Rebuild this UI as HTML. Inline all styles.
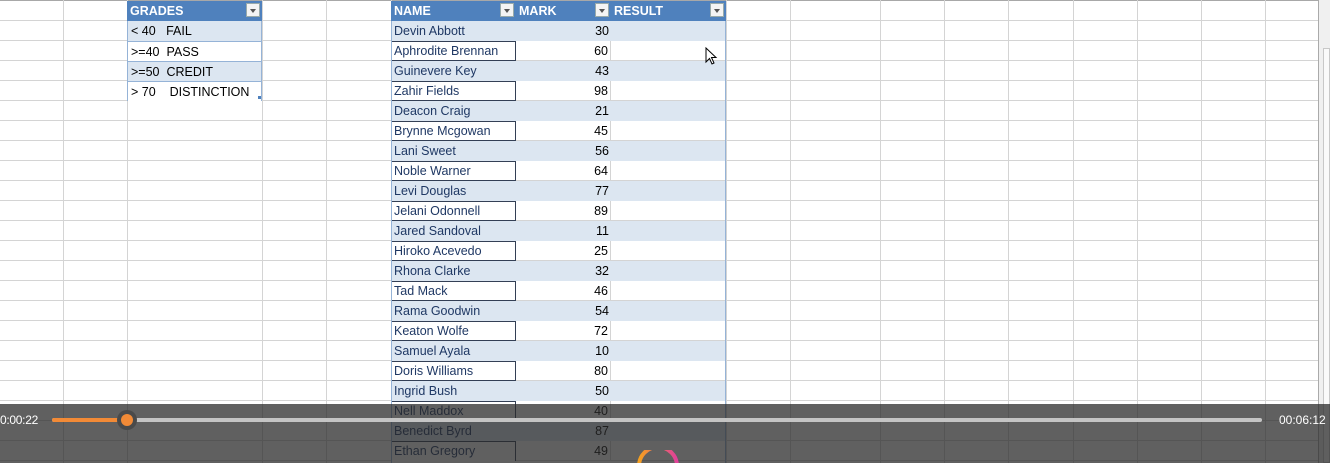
<!DOCTYPE html>
<html><head><meta charset="utf-8"><style>
*{margin:0;padding:0;box-sizing:border-box}
body{width:1330px;height:463px;overflow:hidden;background:#fff;position:relative;font-family:"Liberation Sans",Arial,sans-serif;font-size:12.5px}
.v{position:absolute;top:0;width:1px;height:463px;background:#d4d4d4}
.h{position:absolute;left:0;width:1318px;height:1px;background:#d4d4d4}
.c{position:absolute;height:20px;line-height:20px;white-space:nowrap;overflow:hidden}
.hd{background:#4f81bd;color:#fff;font-weight:bold;padding-left:3px}
.dd{position:absolute;top:3px;width:14px;height:14px;background:#f4f4f4;border:1px solid #9aa;}
.dd:after{content:"";position:absolute;left:3px;top:5px;border-left:3.5px solid transparent;border-right:3.5px solid transparent;border-top:4px solid #555}
.b{background:#dce6f1}
.w{background:#fff}
.nm{color:#1f3864;padding-left:3px}
.mk{text-align:right;padding-right:2px;color:#000}
.g{color:#000;padding-left:3px}
</style></head><body>
<!-- grid -->
<div class="h" style="top:0;background:#a8a8a8"></div>
<div class="h" style="top:20px"></div><div class="h" style="top:40px"></div><div class="h" style="top:60px"></div><div class="h" style="top:80px"></div><div class="h" style="top:100px"></div><div class="h" style="top:120px"></div><div class="h" style="top:140px"></div><div class="h" style="top:160px"></div><div class="h" style="top:180px"></div><div class="h" style="top:200px"></div><div class="h" style="top:220px"></div><div class="h" style="top:240px"></div><div class="h" style="top:260px"></div><div class="h" style="top:280px"></div><div class="h" style="top:300px"></div><div class="h" style="top:320px"></div><div class="h" style="top:340px"></div><div class="h" style="top:360px"></div><div class="h" style="top:380px"></div><div class="h" style="top:400px"></div><div class="h" style="top:420px"></div><div class="h" style="top:440px"></div><div class="h" style="top:460px"></div>
<div class="v" style="left:63px"></div><div class="v" style="left:127px"></div><div class="v" style="left:262px"></div><div class="v" style="left:326px"></div><div class="v" style="left:391px"></div><div class="v" style="left:726px"></div><div class="v" style="left:790px"></div><div class="v" style="left:880px"></div><div class="v" style="left:944px"></div><div class="v" style="left:1008px"></div><div class="v" style="left:1073px"></div><div class="v" style="left:1137px"></div><div class="v" style="left:1201px"></div><div class="v" style="left:1265px"></div><div class="v" style="left:1318px;background:#aaa"></div>
<div style="position:absolute;left:1319px;top:0;width:11px;height:463px;background:#f0f0f0"></div>
<div style="position:absolute;left:1323px;top:48px;width:7px;height:415px;border:1px solid #c8c8c8;background:#fafafa"></div>

<!-- grades table -->
<div class="c hd" style="left:127px;top:1px;width:135px">GRADES</div><div class="dd" style="left:246px"></div>
<div class="c b g" style="left:127px;top:21px;width:135px;border-left:1px solid #95b3d7;border-right:1px solid #95b3d7">&lt; 40&nbsp;&nbsp; FAIL</div>
<div class="c w g" style="left:127px;top:41px;width:135px;border:1px solid #95b3d7;border-width:1px 1px 0 1px">&gt;=40&nbsp; PASS</div>
<div class="c b g" style="left:127px;top:61px;width:135px;border:1px solid #95b3d7;border-width:1px 1px 0 1px">&gt;=50&nbsp; CREDIT</div>
<div class="c w g" style="left:127px;top:81px;width:135px;border:1px solid #95b3d7;border-width:1px 1px 0 1px">&gt; 70&nbsp;&nbsp;&nbsp; DISTINCTION</div>
<div style="position:absolute;left:258px;top:96px;width:3px;height:3px;background:#4f81bd"></div>

<!-- main table header -->
<div class="c hd" style="left:391px;top:1px;width:335px"></div>
<div class="c hd" style="left:391px;top:1px;width:125px;background:none">NAME</div><div class="dd" style="left:500px"></div>
<div class="c hd" style="left:516px;top:1px;width:95px;background:none">MARK</div><div class="dd" style="left:595px"></div>
<div class="c hd" style="left:611px;top:1px;width:115px;background:none">RESULT</div><div class="dd" style="left:710px"></div>

<div id="rows">
<div class="c b" style="left:391px;top:21px;width:335px"></div><div class="c nm" style="left:391px;top:21px;width:125px">Devin Abbott</div><div class="c mk" style="left:516px;top:21px;width:95px">30</div>
<div class="c w" style="left:391px;top:41px;width:125px;border:1px solid #333f55;border-left:none;line-height:18px" ><span class="nm">Aphrodite Brennan</span></div><div class="c mk" style="left:516px;top:41px;width:95px;border-right:1px solid #d4d4d4">60</div>
<div class="c b" style="left:391px;top:61px;width:335px"></div><div class="c nm" style="left:391px;top:61px;width:125px">Guinevere Key</div><div class="c mk" style="left:516px;top:61px;width:95px">43</div>
<div class="c w" style="left:391px;top:81px;width:125px;border:1px solid #333f55;border-left:none;line-height:18px"><span class="nm">Zahir Fields</span></div><div class="c mk" style="left:516px;top:81px;width:95px;border-right:1px solid #d4d4d4">98</div>
<div class="c b" style="left:391px;top:101px;width:335px"></div><div class="c nm" style="left:391px;top:101px;width:125px">Deacon Craig</div><div class="c mk" style="left:516px;top:101px;width:95px">21</div>
<div class="c w" style="left:391px;top:121px;width:125px;border:1px solid #333f55;border-left:none;line-height:18px"><span class="nm">Brynne Mcgowan</span></div><div class="c mk" style="left:516px;top:121px;width:95px;border-right:1px solid #d4d4d4">45</div>
<div class="c b" style="left:391px;top:141px;width:335px"></div><div class="c nm" style="left:391px;top:141px;width:125px">Lani Sweet</div><div class="c mk" style="left:516px;top:141px;width:95px">56</div>
<div class="c w" style="left:391px;top:161px;width:125px;border:1px solid #333f55;border-left:none;line-height:18px"><span class="nm">Noble Warner</span></div><div class="c mk" style="left:516px;top:161px;width:95px;border-right:1px solid #d4d4d4">64</div>
<div class="c b" style="left:391px;top:181px;width:335px"></div><div class="c nm" style="left:391px;top:181px;width:125px">Levi Douglas</div><div class="c mk" style="left:516px;top:181px;width:95px">77</div>
<div class="c w" style="left:391px;top:201px;width:125px;border:1px solid #333f55;border-left:none;line-height:18px"><span class="nm">Jelani Odonnell</span></div><div class="c mk" style="left:516px;top:201px;width:95px;border-right:1px solid #d4d4d4">89</div>
<div class="c b" style="left:391px;top:221px;width:335px"></div><div class="c nm" style="left:391px;top:221px;width:125px">Jared Sandoval</div><div class="c mk" style="left:516px;top:221px;width:95px">11</div>
<div class="c w" style="left:391px;top:241px;width:125px;border:1px solid #333f55;border-left:none;line-height:18px"><span class="nm">Hiroko Acevedo</span></div><div class="c mk" style="left:516px;top:241px;width:95px;border-right:1px solid #d4d4d4">25</div>
<div class="c b" style="left:391px;top:261px;width:335px"></div><div class="c nm" style="left:391px;top:261px;width:125px">Rhona Clarke</div><div class="c mk" style="left:516px;top:261px;width:95px">32</div>
<div class="c w" style="left:391px;top:281px;width:125px;border:1px solid #333f55;border-left:none;line-height:18px"><span class="nm">Tad Mack</span></div><div class="c mk" style="left:516px;top:281px;width:95px;border-right:1px solid #d4d4d4">46</div>
<div class="c b" style="left:391px;top:301px;width:335px"></div><div class="c nm" style="left:391px;top:301px;width:125px">Rama Goodwin</div><div class="c mk" style="left:516px;top:301px;width:95px">54</div>
<div class="c w" style="left:391px;top:321px;width:125px;border:1px solid #333f55;border-left:none;line-height:18px"><span class="nm">Keaton Wolfe</span></div><div class="c mk" style="left:516px;top:321px;width:95px;border-right:1px solid #d4d4d4">72</div>
<div class="c b" style="left:391px;top:341px;width:335px"></div><div class="c nm" style="left:391px;top:341px;width:125px">Samuel Ayala</div><div class="c mk" style="left:516px;top:341px;width:95px">10</div>
<div class="c w" style="left:391px;top:361px;width:125px;border:1px solid #333f55;border-left:none;line-height:18px"><span class="nm">Doris Williams</span></div><div class="c mk" style="left:516px;top:361px;width:95px;border-right:1px solid #d4d4d4">80</div>
<div class="c b" style="left:391px;top:381px;width:335px"></div><div class="c nm" style="left:391px;top:381px;width:125px">Ingrid Bush</div><div class="c mk" style="left:516px;top:381px;width:95px">50</div>
<div class="c w" style="left:391px;top:401px;width:125px;border:1px solid #333f55;border-left:none;line-height:18px"><span class="nm">Nell Maddox</span></div><div class="c mk" style="left:516px;top:401px;width:95px;border-right:1px solid #d4d4d4">40</div>
<div class="c b" style="left:391px;top:421px;width:335px"></div><div class="c nm" style="left:391px;top:421px;width:125px">Benedict Byrd</div><div class="c mk" style="left:516px;top:421px;width:95px">87</div>
<div class="c w" style="left:391px;top:441px;width:125px;border:1px solid #333f55;border-left:none;border-bottom:none;line-height:19px"><span class="nm">Ethan Gregory</span></div><div class="c mk" style="left:516px;top:441px;width:95px;border-right:1px solid #d4d4d4">49</div>
</div>
<div style="position:absolute;left:391px;top:21px;width:1px;height:442px;background:#95b3d7"></div>
<div style="position:absolute;left:725px;top:21px;width:1px;height:442px;background:#95b3d7"></div>

<!-- cursor -->
<svg style="position:absolute;left:705px;top:47px" width="14" height="20" viewBox="0 0 14 20"><path d="M1 1 L1 15 L4.5 11.5 L7 17 L9 16 L6.5 10.5 L11 10.5 Z" fill="#fff" stroke="#000" stroke-width="1"/></svg>

<!-- video overlay -->
<div style="position:absolute;left:0;top:404px;width:1330px;height:59px;background:rgba(40,40,40,0.74)"></div>
<div style="position:absolute;left:0;top:413px;color:#fff;font-size:12px;letter-spacing:-0.3px">0:00:22</div>
<div style="position:absolute;left:1279px;top:413px;color:#fff;font-size:12px">00:06:12</div>
<div style="position:absolute;left:52px;top:418px;width:1210px;height:4px;background:#c4c4c4;border-radius:2px"></div>
<div style="position:absolute;left:52px;top:418px;width:76px;height:4px;background:#f28a36;border-radius:2px"></div>
<div style="position:absolute;left:117px;top:410px;width:20px;height:20px;border-radius:50%;background:#4a4a4a"></div>
<div style="position:absolute;left:121px;top:414px;width:12px;height:12px;border-radius:50%;background:#f28a36"></div>
<svg style="position:absolute;left:636px;top:450px" width="44" height="13"><path d="M3 16 A19 19 0 0 1 41 16" fill="none" stroke="url(#gr)" stroke-width="4"/><defs><linearGradient id="gr"><stop offset="0" stop-color="#f5a020"/><stop offset="1" stop-color="#e0409a"/></linearGradient></defs></svg>
</body></html>
